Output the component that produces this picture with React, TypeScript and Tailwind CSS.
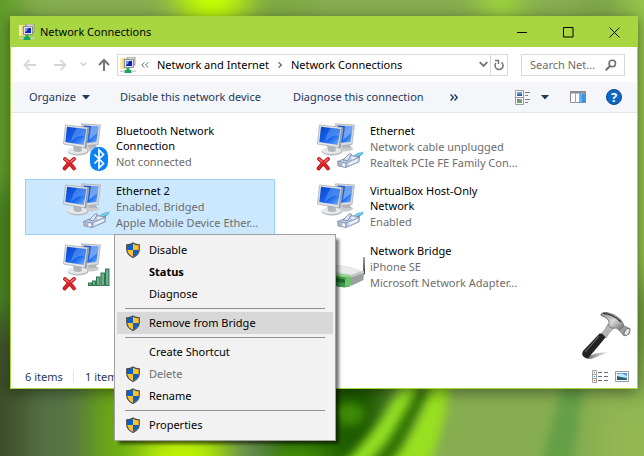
import type { ReactNode } from "react";

// ── Wallpaper: soft, out-of-focus grass behind the window ─────────────────────

function Wallpaper() {
    return (
        <svg
            aria-hidden="true"
            viewBox="0 0 644 456"
            preserveAspectRatio="none"
            className="absolute inset-0 w-full h-full"
        >
            <defs>
                <filter id="soft" x="-20%" y="-20%" width="140%" height="140%" colorInterpolationFilters="sRGB">
                    <feGaussianBlur stdDeviation="16" />
                </filter>
                <filter id="leaf" x="-20%" y="-20%" width="140%" height="140%" colorInterpolationFilters="sRGB">
                    <feGaussianBlur stdDeviation="5" />
                </filter>
            </defs>
            <g filter="url(#soft)">
                <rect x="-60" y="-60" width="760" height="580" fill="#86ae50" />
                <rect x="-60" y="-60" width="80" height="280" fill="#5d9a26" />
                <rect x="-60" y="190" width="80" height="150" fill="#3f7d1c" />
                <rect x="-60" y="320" width="84" height="200" fill="#3c4c28" />
                <rect x="24" y="360" width="66" height="160" fill="#567346" />
                <rect x="90" y="360" width="150" height="160" fill="#6cab12" />
                <ellipse cx="182" cy="464" rx="44" ry="34" fill="#c4f804" />
                <rect x="232" y="420" width="34" height="100" fill="#6b8a62" />
                <rect x="266" y="360" width="124" height="160" fill="#1d5a00" />
                <ellipse cx="300" cy="466" rx="34" ry="18" fill="#57aa0a" />
                <ellipse cx="212" cy="-6" rx="34" ry="44" fill="#c4ff00" />
                <rect x="255" y="-60" width="50" height="90" fill="#7ca842" />
                <rect x="486" y="-60" width="30" height="90" fill="#a4e034" />
                <rect x="590" y="-60" width="26" height="90" fill="#769f44" />
                <rect x="624" y="-60" width="80" height="340" fill="#97c64a" />
                <rect x="630" y="290" width="80" height="60" fill="#6f9c3c" />
                <rect x="600" y="400" width="100" height="100" fill="#93b852" />
            </g>
            <g filter="url(#leaf)">
                <ellipse cx="350" cy="414" rx="14" ry="12" fill="#3f8a06" />
                <path d="M402 384 L418 388 Q400 430 366 466 L336 470 Q380 430 402 384Z" fill="#92e022" />
                <path d="M420 385 L430 390 L394 462 L374 466Z" fill="#2f7004" />
                <path d="M432 382 L450 384 Q444 430 428 468 L384 470 Q420 430 432 382Z" fill="#98df20" />
                <path d="M562 386 L584 386 L572 470 L540 470Z" fill="#649f48" />
            </g>
        </svg>
    );
}

// ── Small icons ───────────────────────────────────────────────────────────────

function FolderNetIcon() {
    return (
        <svg aria-hidden="true" viewBox="0 0 16 16" className="size-4 shrink-0">
            <path d="M0 1h5l1 1v10H0z" fill="#f3dc84" />
            <path d="M0 1h2v11H0z" fill="#fbf0b8" />
            <rect x="7" y="0" width="8" height="8" fill="#dcdcd2" stroke="#8b8b85" strokeWidth="0.8" />
            <rect x="4.5" y="2.5" width="9" height="8" fill="#dfe3ea" stroke="#777d88" strokeWidth="0.8" />
            <path d="M6 4h6v5H6z" fill="#1022b4" />
            <path d="M6 4h3l-1 3-2 1z" fill="#7898f4" />
            <path d="M6.5 11h3v2h2v3h-7v-3h2z" fill="#17a860" />
            <path d="M0 13.5h4.5v1.6H0zM11.5 13.5H16v1.6h-4.500z" fill="#c9ced2" />
        </svg>
    );
}

function ShieldIcon() {
    return (
        <svg aria-hidden="true" viewBox="0 0 16 16" className="size-4 shrink-0">
            <clipPath id="shield-half">
                <path d="M8 1.300C6 2.700 4 3 2 3v4c0 4 2.500 6.300 6 8 3.500-1.700 6-4 6-8V3c-2 0-4-.3-6-1.700z" />
            </clipPath>
            <g clipPath="url(#shield-half)">
                <path d="M0 0h8v8H0zM8 8h8v8H8z" fill="#0a63c4" />
                <path d="M8 0h8v8H8zM0 8h8v8H0z" fill="#fdc02f" />
            </g>
            <path
                d="M8 1C6 2.400 4 2.800 1.700 2.800V7c0 4 2.600 6.800 6.300 8.500 3.700-1.700 6.300-4.500 6.300-8.500V2.800C12 2.800 10 2.400 8 1z"
                fill="none"
                stroke="#4c4c4c"
                strokeWidth="1.200"
            />
        </svg>
    );
}

function CaretDown() {
    return (
        <svg aria-hidden="true" viewBox="0 0 8 5" className="w-2 h-[5px]">
            <path d="M0 0h8L4 4.600z" fill="#1e395b" />
        </svg>
    );
}

// ── Connection icons: two monitors plus an overlay ────────────────────────────

function Monitors() {
    return (
        <g>
            <ellipse cx="31" cy="28.500" rx="8" ry="3" fill="#c9cbcd" />
            <path d="M28 22h7l2 6h-8z" fill="#b5b8bb" />
            <path d="M21.500 3.800 40.500 5 38 24.500 24 26z" fill="#d9dbdd" stroke="#a3a7ab" strokeWidth="0.7" />
            <path d="M23.500 5.600 38.500 6.500 36.500 22 25 23z" fill="url(#screen)" />
            <path d="M31 6 38.500 6.500 37.500 13 29 20z" fill="#a9cdfb" opacity="0.6" />
            <ellipse cx="18" cy="31.500" rx="10.500" ry="4" fill="#b9bcbe" />
            <ellipse cx="17.500" cy="30.600" rx="10" ry="3.500" fill="#e7e8e9" />
            <path d="M13 24h8l1 7q-4 2-8 0z" fill="#b3b6b9" />
            <path d="M5.500 5 29 7.500 26 28 3.500 24z" fill="#e3e5e7" stroke="#a3a7ab" strokeWidth="0.7" />
            <path d="M29 7.500 26 28 24.500 27.700 27.300 7.300z" fill="#989ca1" />
            <path d="M7 6.800 26.400 9 23.800 25 5.300 22z" fill="url(#screen)" />
            <path d="M17 7.900 26.400 9 25.300 15.500Q16 15 11 22.500q1-8 6-14.600z" fill="#8fc0fc" opacity="0.35" />
        </g>
    );
}

function RedCross() {
    return (
        <g strokeLinecap="round" fill="none">
            <path d="M5 39Q10 42.500 14 48.500M14 39Q9 42.500 4.500 48.500" stroke="#a80f12" strokeWidth="3.800" />
            <path d="M5 39Q10 42.500 14 48.500M14 39Q9 42.500 4.500 48.500" stroke="#e42328" strokeWidth="2.600" />
            <path d="M5 39 8 41.500M14 39 11 41.500" stroke="#f58084" strokeWidth="1.200" />
        </g>
    );
}

function Bluetooth() {
    return (
        <g>
            <rect x="30" y="27" width="18" height="24" rx="8.500" fill="#0a82f7" />
            <path
                d="M34.500 34.500 43.500 43.500 39 48V30l4.500 4.500-9 9"
                fill="none"
                stroke="#fff"
                strokeWidth="1.700"
            />
        </g>
    );
}

function EthernetPlug() {
    return (
        <g strokeLinejoin="round">
            <path d="M40 35.500Q43 32.500 49.500 31.500L49 34Q46 35.500 44 39z" fill="#49b4dc" />
            <path d="M41.500 36 48.500 32.500" stroke="#a8dcf0" />
            <path d="M23.500 41.500 38 35.500 45.500 37 45 42 32 47.500 24 46z" fill="#bccbe6" stroke="#74839e" strokeWidth="0.7" />
            <path d="M23.500 41.500 32 43 45.500 37M32 43V47.500" fill="none" stroke="#74839e" strokeWidth="0.7" />
            <path d="M29 40 35 34 37.500 34 34 40.500z" fill="#dfe8f6" stroke="#66758f" strokeWidth="0.7" />
            <path d="M34.500 42.800 44 38.800 43.800 41.300 34.500 45.500z" fill="#eaf0fa" />
            <path d="M37 36.800 43 37.500 38 39.500z" fill="#edf3fc" />
            <path d="M25.200 43v2.500M27.200 43.400v2.500" stroke="#a4965c" strokeWidth="0.900" />
            <path d="M28.500 43.300 31 43.800V46.500L28.500 46z" fill="#f5f7fa" />
        </g>
    );
}

function SignalBars() {
    return (
        <g fill="#6fb08c" stroke="#226b43" strokeWidth="0.9">
            <rect x="28.500" y="43" width="3" height="2.500" />
            <rect x="32.500" y="41" width="3" height="4.500" />
            <rect x="36.500" y="37" width="3.500" height="8.500" />
            <rect x="41" y="33" width="3.500" height="12.500" />
            <rect x="45.500" y="29" width="3.500" height="16.500" />
        </g>
    );
}

function BridgeBox() {
    return (
        <g>
            <path d="M49.500 17 50.500 17 51 34 49 35z" fill="#3f4347" />
            <path d="M6 28 24 25Q38 26.500 49 32L39 38 6 33z" fill="#d4d6d7" />
            <path d="M6 28 24 25 47 30.500 38 35z" fill="#e9eaea" />
            <path d="M37 35 50 31 49.500 40 37 46z" fill="#9b9fa1" />
            <path d="M37 35 50 31V33L37 37.500z" fill="#c6c9ca" />
            <path d="M6 32 27 36V47L6 43z" fill="#1f6a2c" />
            <path d="M18 33 36 35V38L24 37z" fill="#8fd488" />
            <path d="M22 36 36 38V46.500L30 47.500 22 46z" fill="#3e9a48" />
            <path d="M22 38 31 39.500V43L22 42z" fill="#1f6a2c" />
            <path d="M31 39 37 36V45L31 47.500z" fill="#6fc070" />
        </g>
    );
}

type Overlay = "bluetooth" | "ethernet" | "wifi" | "bridge";

function ConnectionIcon({ overlay, offline }: { overlay: Overlay; offline?: boolean }) {
    return (
        <svg aria-hidden="true" viewBox="0 0 54 54" className="size-[54px] shrink-0">
            <defs>
                <linearGradient id="screen" x1="0" y1="0" x2="1" y2="1">
                    <stop offset="0" stopColor="#0a45cf" />
                    <stop offset="0.6" stopColor="#1a68ee" />
                    <stop offset="1" stopColor="#7fb8fa" />
                </linearGradient>
            </defs>
            {overlay === "bridge" ? <BridgeBox /> : <Monitors />}
            {offline && <RedCross />}
            {overlay === "bluetooth" && <Bluetooth />}
            {overlay === "ethernet" && <EthernetPlug />}
            {overlay === "wifi" && <SignalBars />}
        </svg>
    );
}

// ── Context menu ──────────────────────────────────────────────────────────────

interface MenuEntry {
    label: string;
    shield?: boolean;
    bold?: boolean;
    disabled?: boolean;
    hovered?: boolean;
}

const MENU_GROUPS: MenuEntry[][] = [
    [{ label: "Disable", shield: true }, { label: "Status", bold: true }, { label: "Diagnose" }],
    [{ label: "Remove from Bridge", shield: true, hovered: true }],
    [
        { label: "Create Shortcut" },
        { label: "Delete", shield: true, disabled: true },
        { label: "Rename", shield: true },
    ],
    [{ label: "Properties", shield: true }],
];

function ContextMenu() {
    return (
        <div
            role="menu"
            className="absolute left-[88px] top-[54px] z-10 w-[222px] border border-[#a0a0a0] bg-[#f2f2f2] px-[2px] py-1 shadow-[4px_4px_3px_-1px_rgba(0,0,0,0.55)]"
        >
            {MENU_GROUPS.map((group, index) => (
                <div key={group[0].label} role="group">
                    {index > 0 && <hr className="mx-2 my-[3px] border-[#919191]" />}
                    {group.map((entry) => (
                        <button
                            key={entry.label}
                            type="button"
                            role="menuitem"
                            disabled={entry.disabled}
                            className={[
                                "flex h-[22px] w-full items-center gap-2 pl-2 text-left",
                                entry.hovered ? "bg-[#d8d8d8]" : "",
                                entry.bold ? "font-bold" : "",
                                entry.disabled ? "text-[#6d6d6d]" : "text-black",
                            ].join(" ")}
                        >
                            {entry.shield ? <ShieldIcon /> : <span className="w-4" />}
                            {entry.label}
                        </button>
                    ))}
                </div>
            ))}
        </div>
    );
}

// ── Connection tiles ──────────────────────────────────────────────────────────

interface Connection {
    id: string;
    name?: string;
    details?: string[];
    overlay: Overlay;
    offline?: boolean;
    selected?: boolean;
}

const CONNECTIONS: Connection[] = [
    {
        id: "bluetooth",
        name: "Bluetooth Network Connection",
        details: ["Not connected"],
        overlay: "bluetooth",
        offline: true,
    },
    {
        id: "ethernet",
        name: "Ethernet",
        details: ["Network cable unplugged", "Realtek PCIe FE Family Con..."],
        overlay: "ethernet",
        offline: true,
    },
    {
        id: "ethernet-2",
        name: "Ethernet 2",
        details: ["Enabled, Bridged", "Apple Mobile Device Ether..."],
        overlay: "ethernet",
        selected: true,
    },
    { id: "virtualbox", name: "VirtualBox Host-Only Network", details: ["Enabled"], overlay: "ethernet" },
    { id: "wifi", overlay: "wifi", offline: true },
    {
        id: "bridge",
        name: "Network Bridge",
        details: ["iPhone SE", "Microsoft Network Adapter..."],
        overlay: "bridge",
    },
];

function ConnectionTile({ name, details = [], overlay, offline, selected }: Connection) {
    return (
        <li
            className={[
                "relative flex h-14 gap-[2px] border pl-[34px]",
                selected ? "border-[#99d1ff] bg-[#cce8ff]" : "border-transparent",
            ].join(" ")}
        >
            <ConnectionIcon overlay={overlay} offline={offline} />
            <div className="min-w-0 flex-1 pt-[3px]">
                {name && <p className="mb-px max-w-[128px] leading-[15px] text-black">{name}</p>}
                {details.map((line) => (
                    <p key={line} className="whitespace-nowrap leading-4 text-[#6d6d6d]">{line}</p>
                ))}
            </div>
            {selected && <ContextMenu />}
        </li>
    );
}

// ── Window chrome ─────────────────────────────────────────────────────────────

function CaptionButton({ label, children }: { label: string; children: ReactNode }) {
    return (
        <button type="button" aria-label={label} className="flex h-full w-[46px] items-center justify-center">
            <svg aria-hidden="true" viewBox="0 0 11 11" className="size-[11px]" fill="none" stroke="#000">
                {children}
            </svg>
        </button>
    );
}

function TitleBar() {
    return (
        <header className="flex h-[30px] items-center bg-[#a8d640] pl-2">
            <FolderNetIcon />
            <h1 className="flex-1 pl-[5px] text-black">Network Connections</h1>
            <CaptionButton label="Minimize"><path d="M0 5.500h10" /></CaptionButton>
            <CaptionButton label="Maximize"><path d="M.5.5h9.500v9.500H.5z" /></CaptionButton>
            <CaptionButton label="Close"><path d="M.5.5l10 10M10.500.5l-10 10" /></CaptionButton>
        </header>
    );
}

function NavBar() {
    return (
        <nav className="flex h-[35px] items-center pl-3 pr-3">
            <button type="button" aria-label="Back" className="w-[30px]">
                <svg aria-hidden="true" viewBox="0 0 14 12" className="h-3 w-3.5" fill="none" stroke="#d6d6d6" strokeWidth="1.800">
                    <path d="M13 6H2M6.500 1 1.500 6l5 5" />
                </svg>
            </button>
            <button type="button" aria-label="Forward" className="w-[27px]">
                <svg aria-hidden="true" viewBox="0 0 14 12" className="h-3 w-3.5" fill="none" stroke="#d6d6d6" strokeWidth="1.800">
                    <path d="M1 6h11M7.500 1l5 5-5 5" />
                </svg>
            </button>
            <button type="button" aria-label="Recent locations" className="w-[17px]">
                <svg aria-hidden="true" viewBox="0 0 7 5" className="h-[5px] w-[7px]" fill="none" stroke="#d0d0d0" strokeWidth="1.500">
                    <path d="M.5.5l3 3 3-3" />
                </svg>
            </button>
            <button type="button" aria-label="Up" className="w-5">
                <svg aria-hidden="true" viewBox="0 0 12 13" className="ml-px h-[13px] w-3" fill="none" stroke="#757575" strokeWidth="2">
                    <path d="M6 13V2M1 7l5-5 5 5" />
                </svg>
            </button>
            <div className="flex h-[22px] min-w-0 flex-1 items-center border border-[#d9d9d9] pl-[2px] text-black">
                <FolderNetIcon />
                <svg aria-hidden="true" viewBox="0 0 8 6" className="ml-[5px] h-1.5 w-2" fill="none" stroke="#6b6b6b">
                    <path d="M3.500.3.800 3l2.700 2.700M7.300.3 4.600 3l2.700 2.700" />
                </svg>
                <a href="#network" className="ml-2 whitespace-nowrap">Network and Internet</a>
                <svg aria-hidden="true" viewBox="0 0 4 6" className="mx-[9px] h-1.5 w-1" fill="none" stroke="#666" strokeWidth="1.300">
                    <path d="M.5.3 3.300 3 .5 5.700" />
                </svg>
                <a href="#connections" className="flex-1 whitespace-nowrap">Network Connections</a>
                <button type="button" aria-label="Previous locations" className="px-[2px]">
                    <svg aria-hidden="true" viewBox="0 0 9 7" className="h-[7px] w-[9px]" fill="none" stroke="#747474" strokeWidth="1.900">
                        <path d="M.7 1.200 4.500 5l3.800-3.800" />
                    </svg>
                </button>
                <button
                    type="button"
                    aria-label="Refresh"
                    className="flex h-full w-[17px] items-center justify-center border-l border-[#d9d9d9]"
                >
                    <svg aria-hidden="true" viewBox="0 0 10 12" className="h-3 w-2.5" fill="none" stroke="#747474" strokeWidth="1.500">
                        <path d="M7.500 3.400A4 4 0 1 1 2 4M1 1.500h3.500V5" />
                    </svg>
                </button>
            </div>
            <label className="ml-[13px] flex h-[22px] w-[104px] items-center border border-[#d9d9d9] pl-2 pr-[7px]">
                <input
                    type="text"
                    aria-label="Search Network Connections"
                    placeholder="Search Net..."
                    className="w-0 min-w-0 flex-1 outline-none placeholder:text-[#6d6d6d]"
                />
                <svg aria-hidden="true" viewBox="0 0 12 12" className="size-3" fill="none" stroke="#6f6f6f" strokeWidth="1.600">
                    <circle cx="7.300" cy="4.500" r="3.200" />
                    <path d="M5 7 .8 11.200" strokeWidth="2" />
                </svg>
            </label>
        </nav>
    );
}

function CommandBar() {
    return (
        <div role="toolbar" className="flex h-[31px] items-center border-b border-[#e3e6ea] bg-[#f4f6f9] pl-[18px] pr-[15px] text-[#1e395b]">
            <button type="button" className="flex w-[91px] items-center gap-1.5">
                Organize
                <CaretDown />
            </button>
            <button type="button" className="w-[173px] whitespace-nowrap text-left">Disable this network device</button>
            <button type="button" className="w-[157px] whitespace-nowrap text-left">Diagnose this connection</button>
            <button type="button" aria-label="More commands">
                <svg aria-hidden="true" viewBox="0 0 8 7" className="h-[7px] w-2" fill="none" stroke="#1e395b" strokeWidth="1.400">
                    <path d="M.6.6 3.400 3.500.6 6.400M4.500.6l2.800 2.900-2.800 2.900" />
                </svg>
            </button>
            <div className="flex-1" />
            <button type="button" aria-label="Change your view" className="flex items-center gap-[11px]">
                <svg aria-hidden="true" viewBox="0 0 15 15" className="size-[15px]">
                    <path d="M.5.500h8v14h-8zM.5 7.500h8" fill="#fff" stroke="#9a9a9a" />
                    <path d="M2 2h5v4H2z" fill="#5b9ee0" />
                    <path d="M2 4.500 7 4v2H2z" fill="#35618c" />
                    <path d="M2 9h5v4H2z" fill="#68a85a" />
                    <path d="M4 9h3v2z" fill="#e28a46" />
                    <path d="M2 9h2v2H2z" fill="#4c83c4" />
                    <path d="M10 2.500h5M10 5.500h3M10 9.500h5M10 12.500h3" stroke="#7f7f7f" />
                </svg>
                <CaretDown />
            </button>
            <button type="button" aria-label="Show the preview pane" className="ml-[21px]">
                <svg aria-hidden="true" viewBox="0 0 16 12" className="h-3 w-4">
                    <path d="M.5.5h15v11H.5z" fill="#fff" stroke="#8e8e8e" />
                    <path d="M0 0h16v2.500H0z" fill="#8e8e8e" />
                    <path d="M5.500 2v10" stroke="#a8a8a8" />
                    <path d="M9 2.500h6.500v9H9z" fill="#3b93e3" />
                    <path d="M9 2.500h3v9H9z" fill="#5fb0f3" />
                </svg>
            </button>
            <button
                type="button"
                aria-label="Get help"
                className="ml-5 flex size-4 items-center justify-center rounded-full border border-[#0a4a94] bg-[#0c66c6] text-[13px] font-bold leading-4 text-white"
            >
                ?
            </button>
        </div>
    );
}

function StatusBar() {
    return (
        <footer className="flex h-[23px] items-center pl-3.5 pr-2 text-[#1e395b]">
            <span className="w-12">6 items</span>
            <span className="h-3 w-px bg-[#e5e5e5]" />
            <span className="flex-1 pl-[11px]">1 item</span>
            <button type="button" aria-label="Details view">
                <svg aria-hidden="true" viewBox="0 0 16 13" className="h-[13px] w-4" fill="none" stroke="#a0a0a0">
                    <path d="M.5.5h4v12h-4zM.5 4.500h4M.5 8.500h4" />
                    <path d="M6 2.500h4M12 2.500h4M6 6.500h4M12 6.500h4M6 10.500h4M12 10.500h4" stroke="#707070" />
                    <path d="M2 2.500h1" stroke="#666" />
                    <path d="M2 6.500h1" stroke="#2d8be8" />
                    <path d="M2 10.500h1" stroke="#d22" />
                </svg>
            </button>
            <button type="button" aria-label="Large icons view" className="ml-[7px]">
                <svg aria-hidden="true" viewBox="0 0 14 11" className="h-[11px] w-3.5">
                    <path d="M.5.5h13v10H.5z" fill="#fff" stroke="#9a9a9a" />
                    <path d="M2 2h10v7H2z" fill="#4c95de" />
                    <path d="M2 3 7 2.500 12 5v1.500L2 5.500z" fill="#c8e4f8" />
                    <path d="M2 5 6 6.200 12 8v1H2z" fill="#2a5f66" />
                </svg>
            </button>
        </footer>
    );
}

function Hammer() {
    return (
        <svg aria-hidden="true" viewBox="0 0 50 50" className="absolute bottom-1 right-1.5 size-[50px]">
            <defs>
                <linearGradient id="steel" x1="0" y1="0" x2="1" y2="1">
                    <stop offset="0" stopColor="#8a8a8a" />
                    <stop offset="0.5" stopColor="#d8d8d8" />
                    <stop offset="1" stopColor="#5c5c5c" />
                </linearGradient>
                <linearGradient id="shade" x1="0" y1="0" x2="1" y2="0">
                    <stop offset="0" stopColor="#444" />
                    <stop offset="1" stopColor="#fff" />
                </linearGradient>
            </defs>
            <path d="M5 47Q12 41 29 41Q20 44 13 47Q8 49 5 47z" fill="url(#shade)" opacity="0.8" />
            <path d="M20 23Q25 18 27 13Q30 15 33 17Q28 21 25 27z" fill="#b5b5b5" stroke="#777" strokeWidth="0.5" />
            <path
                d="M20 3Q22 1 26 1.500Q34 3 39 8Q42 11 43 15L39 20Q36 16 31 17Q27 16 28 12Q29 8 20 4.500z"
                fill="url(#steel)"
                stroke="#555"
                strokeWidth="0.7"
            />
            <path d="M22 2.400Q32 3 40 11" fill="none" stroke="#333" strokeWidth="1.300" />
            <path d="M38 19 43 15 49 17.500 48 23 43 25z" fill="#9c9c9c" stroke="#666" strokeWidth="0.6" />
            <ellipse cx="46" cy="21" rx="2.300" ry="4" transform="rotate(35 46 21)" fill="#e4e4e4" stroke="#555" strokeWidth="0.7" />
            <path d="M18.500 22.500Q22 22 24.500 26.500L9 45Q7 49 3 46Q0 44 2 40z" fill="#222" />
            <path d="M18 25 4 41" stroke="#5c5c5c" strokeWidth="1.200" />
        </svg>
    );
}

export default function App() {
    return (
        <main className="relative flex h-screen overflow-hidden pb-[67px] pl-2.5 pr-1.5 pt-4 font-['Noto_Sans','Open_Sans',sans-serif] text-[11px] leading-4">
            <Wallpaper />
            <section className="relative flex min-w-0 flex-1 flex-col border border-[#a8d640] bg-white shadow-[0_3px_14px_rgba(0,0,0,0.45)]">
                <TitleBar />
                <NavBar />
                <CommandBar />
                <div className="relative flex-1 pl-3.5 pt-1.5">
                    <ul className="grid grid-cols-[repeat(auto-fill,250px)] gap-1">
                        {CONNECTIONS.map((connection) => (
                            <ConnectionTile key={connection.id} {...connection} />
                        ))}
                    </ul>
                    <Hammer />
                </div>
                <StatusBar />
            </section>
        </main>
    );
}
